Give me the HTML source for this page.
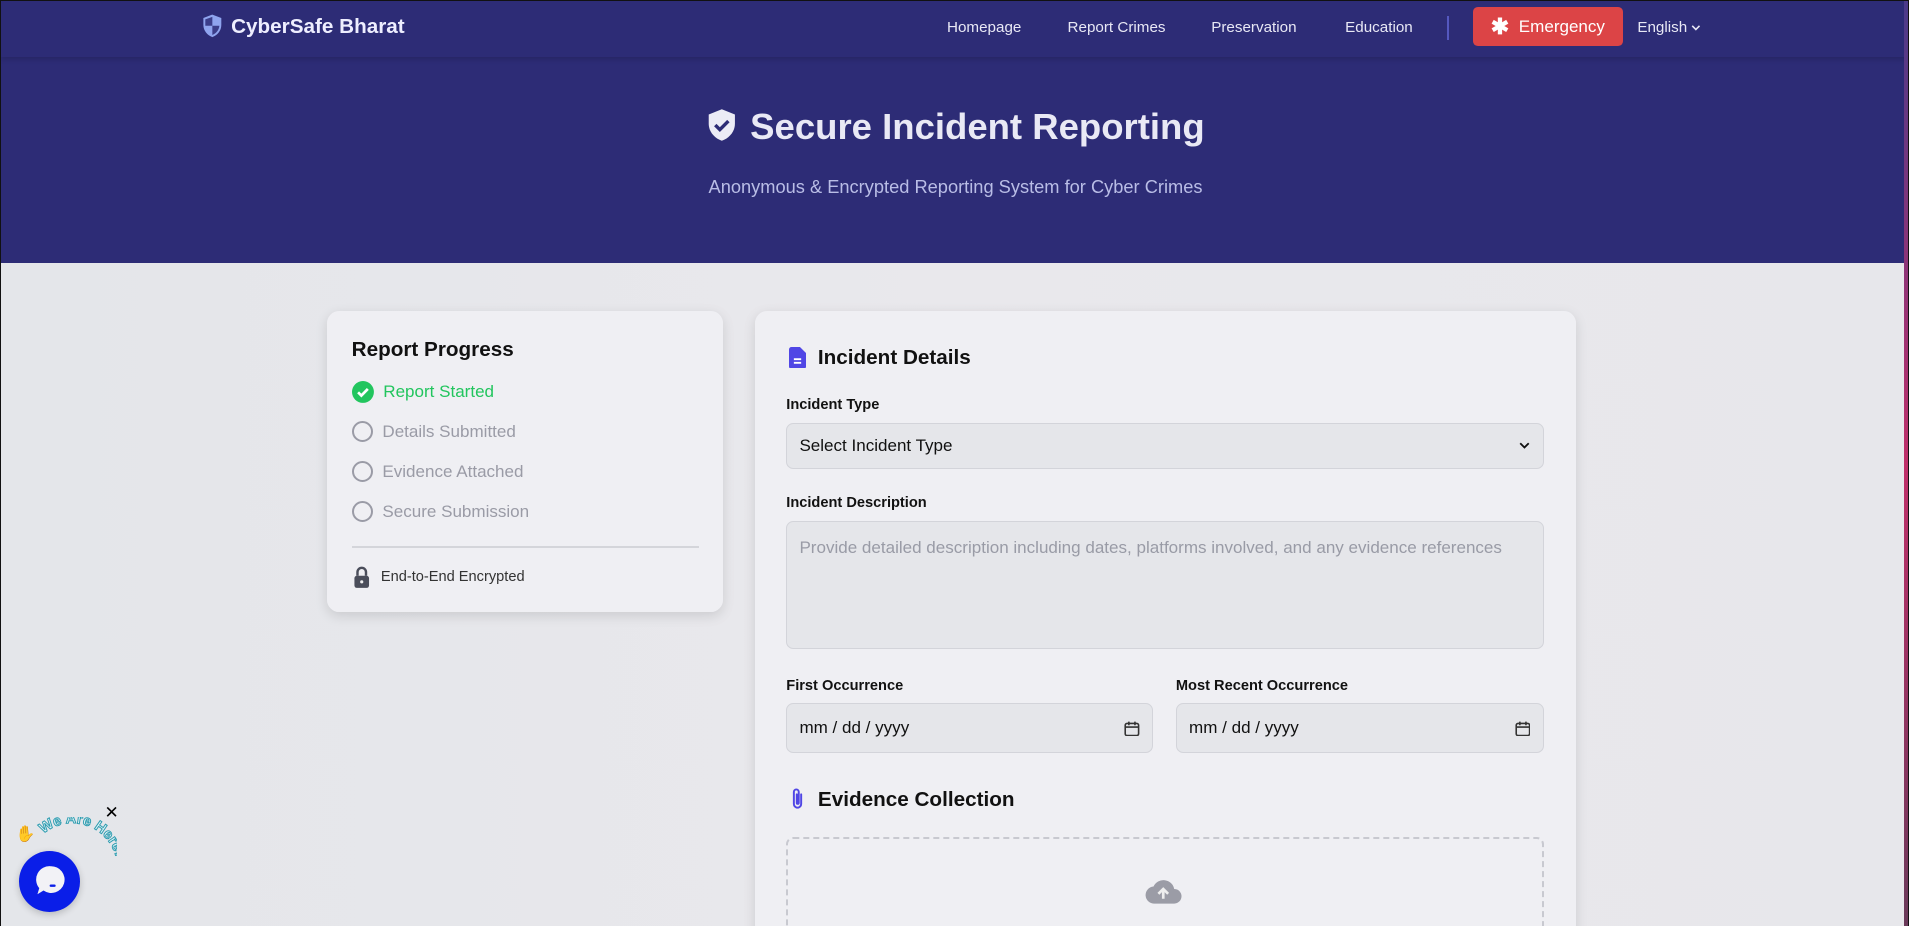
<!DOCTYPE html>
<html><head><meta charset="utf-8"><style>
html,body{margin:0;padding:0;width:1909px;height:926px;overflow:hidden;background:#e6e7ec;}
#w{zoom:1.2175;width:1568px;height:761px;position:relative;font-family:"Liberation Sans",sans-serif;overflow:hidden;background:linear-gradient(90deg,#e4e6ea,#e9e8ec 50%,#e7e7eb);border:1px solid #111;box-sizing:border-box;}
.hdr{position:absolute;left:0;top:0;width:1568px;height:215px;background:#2d2c76;}
.nav{position:absolute;left:0;top:0;width:100%;height:46px;box-shadow:0 2px 4px rgba(0,0,0,.15);}
.logo{position:absolute;left:165px;top:11px;color:#eef;font-weight:bold;font-size:17px;display:flex;align-items:center;gap:7px}
.nl{position:absolute;top:15px;color:#e8e8f5;font-size:12.5px}
.em{position:absolute;left:1209px;top:5px;width:123px;height:32px;background:#dc4446;border-radius:4px;color:#fff;font-size:14px;display:flex;align-items:center;justify-content:center;gap:8px}
.t1{position:absolute;left:0;width:1568px;top:86px;text-align:center;color:#e9e9f5;font-size:30px;font-weight:bold}
.t2{position:absolute;left:0;width:1568px;top:144px;text-align:center;color:#b9bde6;font-size:15px}
.card{position:absolute;background:rgba(240,240,244,.9);border-radius:10px;box-shadow:0 3px 10px rgba(0,0,0,.12)}
.st{position:absolute;left:20px;display:flex;align-items:center;gap:8px;font-size:14px;color:#9a9ba6}
.circ{width:14px;height:14px;border:2px solid #9a9ba6;border-radius:50%}
.lab{position:absolute;font-size:12px;color:#111;font-weight:bold}
.inp{position:absolute;border:1px solid #d3d4da;background:#e5e6ea;border-radius:6px;box-sizing:border-box;font-size:14px;color:#111;padding:0 10px;display:flex;align-items:center}
</style></head><body><div id="w">
<div class="hdr">
<div class="nav">
<div class="logo"><svg width="17" height="20" viewBox="0 0 16 19"><path d="M8 1L1.5 3.5v5c0 4.2 2.8 7.6 6.5 9 3.7-1.4 6.5-4.8 6.5-9v-5z" fill="#8fa4ef" stroke="#8fa4ef" stroke-width="1"/><path d="M8 2.2v7H2.5v-5zM8 9.2h5.5c-.3 3.3-2.5 6-5.5 7.2z" fill="#3b3d8a"/></svg>CyberSafe Bharat</div>
<div class="nl" style="left:777px">Homepage</div>
<div class="nl" style="left:876px">Report Crimes</div>
<div class="nl" style="left:994px">Preservation</div>
<div class="nl" style="left:1104px">Education</div>
<div style="position:absolute;left:1188px;top:12px;width:1px;height:20px;background:#5558c0"></div>
<div class="em"><span style="font-size:18px;font-weight:bold">✱</span>Emergency</div>
<div class="nl" style="left:1344px">English <svg width="8" height="6" viewBox="0 0 8 6" style="vertical-align:1px"><path d="M1 1.5l3 3 3-3" stroke="#e8e8f5" stroke-width="1.3" fill="none"/></svg></div>
</div>
<div class="t1"><svg width="26" height="28" viewBox="0 0 24 26" style="vertical-align:-3px;margin-right:10px"><path d="M12 1L2 5v7c0 6 4.3 11 10 13 5.7-2 10-7 10-13V5z" fill="#ececf6"/><path d="M7 13l3.5 3.5L17 10" stroke="#2d2c76" stroke-width="2.6" fill="none"/></svg>Secure Incident Reporting</div>
<div class="t2">Anonymous &amp; Encrypted Reporting System for Cyber Crimes</div>
</div>

<div class="card" style="left:268px;top:255px;width:325px;height:247px">
<div style="position:absolute;left:20px;top:22px;font-size:17px;font-weight:bold;color:#111">Report Progress</div>
<div class="st" style="top:57px;color:#22c55e"><svg width="18" height="18" viewBox="0 0 18 18"><circle cx="9" cy="9" r="9" fill="#22c55e"/><path d="M5 9.3l2.7 2.7L13 6.5" stroke="#fff" stroke-width="2.2" fill="none"/></svg>Report Started</div>
<div class="st" style="top:90px"><div class="circ"></div>Details Submitted</div>
<div class="st" style="top:123px"><div class="circ"></div>Evidence Attached</div>
<div class="st" style="top:156px"><div class="circ"></div>Secure Submission</div>
<div style="position:absolute;left:20px;top:193px;width:285px;height:1px;background:#d4d5da"></div>
<div class="st" style="top:209px;color:#333;font-size:12px"><svg width="16" height="18" viewBox="0 0 14 18"><path d="M3.5 8V5a3.5 3.5 0 017 0v3" stroke="#4a4d5a" stroke-width="2" fill="none"/><rect x="1" y="8" width="12" height="10" rx="2" fill="#4a4d5a"/><circle cx="7" cy="13" r="1.3" fill="#eee"/></svg>End-to-End Encrypted</div>
</div>

<div class="card" style="left:619px;top:255px;width:675px;height:520px">
<div style="position:absolute;left:28px;top:28px;font-size:17px;font-weight:bold;color:#111;display:flex;align-items:center;gap:10px"><svg width="14" height="18" viewBox="0 0 14 18"><path d="M0 2a2 2 0 012-2h7l5 5v11a2 2 0 01-2 2H2a2 2 0 01-2-2z" fill="#5046e5"/><path d="M4 10h6M4 13h6" stroke="#fff" stroke-width="1.5"/></svg>Incident Details</div>
<div class="lab" style="left:26px;top:70px">Incident Type</div>
<div class="inp" style="left:26px;top:92px;width:622px;height:37px;justify-content:space-between">Select Incident Type<svg width="9" height="6" viewBox="0 0 9 6"><path d="M1 1l3.5 3.5L8 1" stroke="#111" stroke-width="1.5" fill="none"/></svg></div>
<div class="lab" style="left:26px;top:151px">Incident Description</div>
<div class="inp" style="left:26px;top:172px;width:622px;height:105px;align-items:flex-start;padding-top:13px;color:#999ba6">Provide detailed description including dates, platforms involved, and any evidence references</div>
<div class="lab" style="left:26px;top:301px">First Occurrence</div>
<div class="inp" style="left:26px;top:322px;width:301px;height:41px;justify-content:space-between">mm / dd / yyyy<svg width="13" height="13" viewBox="0 0 13 13"><rect x="1" y="2" width="11" height="10" rx="1.5" stroke="#333" stroke-width="1.3" fill="none"/><path d="M1 5h11M4 0.5v3M9 0.5v3" stroke="#333" stroke-width="1.3"/></svg></div>
<div class="lab" style="left:346px;top:301px">Most Recent Occurrence</div>
<div class="inp" style="left:346px;top:322px;width:302px;height:41px;justify-content:space-between">mm / dd / yyyy<svg width="13" height="13" viewBox="0 0 13 13"><rect x="1" y="2" width="11" height="10" rx="1.5" stroke="#333" stroke-width="1.3" fill="none"/><path d="M1 5h11M4 0.5v3M9 0.5v3" stroke="#333" stroke-width="1.3"/></svg></div>
<div style="position:absolute;left:28px;top:391px;font-size:17px;font-weight:bold;color:#111;display:flex;align-items:center;gap:10px"><svg width="14" height="20" viewBox="0 0 14 20"><path d="M10 6v8a3 3 0 01-6 0V4a2 2 0 014 0v9a.8.8 0 01-1.6 0V6" stroke="#5046e5" stroke-width="1.6" fill="none" stroke-linecap="round"/></svg>Evidence Collection</div>
<div style="position:absolute;left:26px;top:432px;width:622px;height:100px;border:2px dashed #c8c9d0;border-radius:6px;box-sizing:border-box"></div>
<svg style="position:absolute;left:321px;top:465px" width="30" height="22" viewBox="0 0 30 22"><path d="M8 21a7 7 0 01-1-14 9 9 0 0117 2 6 6 0 010 12z" fill="#9b9ca6"/><path d="M15 17V10M11 13l4-4 4 4" stroke="#eee" stroke-width="2.2" fill="none"/></svg>
</div>

<div style="position:absolute;left:85px;top:659px;font-size:14px">✕</div>
<div style="position:absolute;left:15px;top:698px;width:50px;height:50px;border-radius:50%;background:#0a1ee8;box-shadow:0 2px 6px rgba(0,0,0,.2)"><svg style="position:absolute;left:13px;top:12px" width="26" height="26" viewBox="0 0 26 26"><path d="M13 1a11 11 0 11-6 20l-5 3 1.5-5A11 11 0 0113 1z" fill="#f2f2f6"/><path d="M13 17h3" stroke="#0a1ee8" stroke-width="2" stroke-linecap="round"/></svg></div>
<div style="position:absolute;left:12px;top:676px;font-size:13px">✋</div>
<svg style="position:absolute;left:25px;top:670px" width="70" height="80" viewBox="0 0 70 80"><defs><path id="arc" d="M10 14 A30 30 0 0 1 58 70"/></defs><text font-family="Liberation Sans" font-weight="bold" font-size="12" fill="#dff3f6" stroke="#2e9cb0" stroke-width=".8"><textPath href="#arc">We Are Here!</textPath></text></svg>
<div style="position:absolute;right:0;top:0;width:3px;height:761px;background:linear-gradient(#4a3a8a,#c0306a 50%,#6a3a5a)"></div>
</div></body></html>
